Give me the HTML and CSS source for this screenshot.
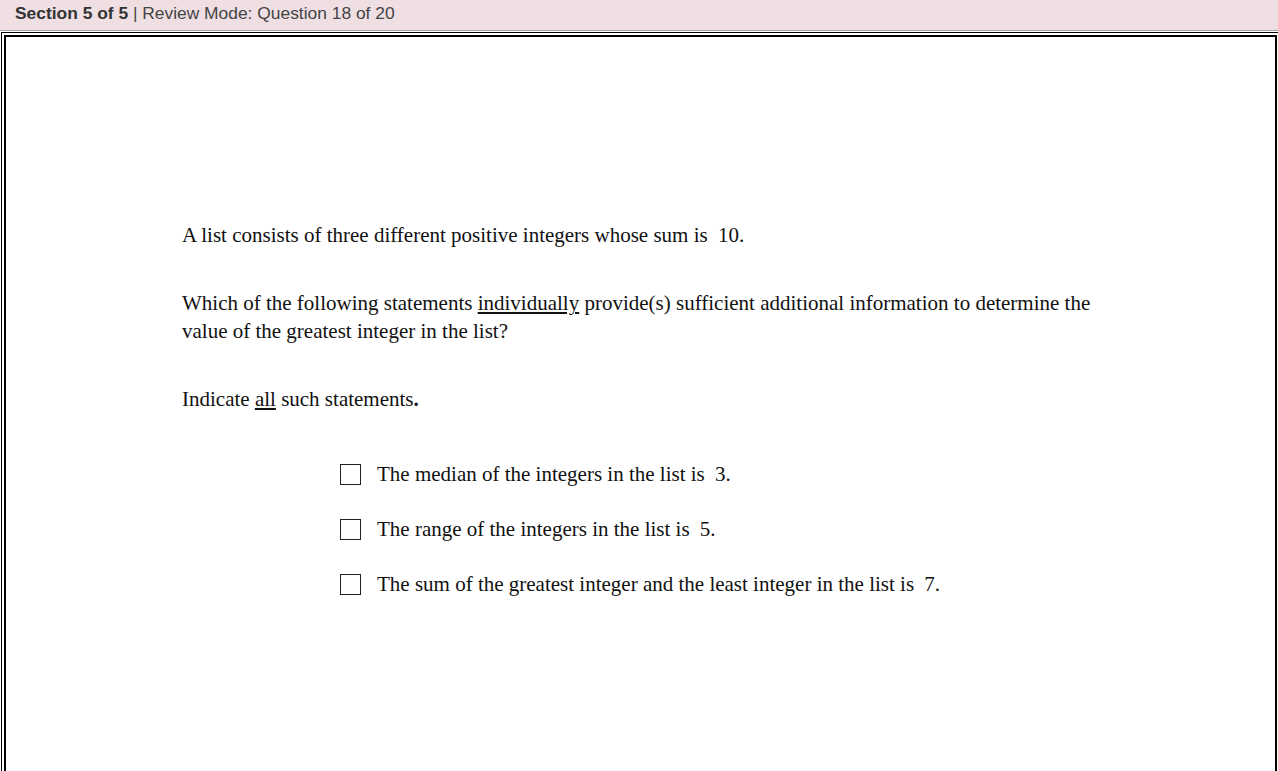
FILE: index.html
```html
<!DOCTYPE html>
<html>
<head>
<meta charset="utf-8">
<link rel="stylesheet" href="styles.css">
</head>
<body>
<div class="header">
  <span class="section">Section 5 of 5</span> | Review Mode: Question 18 of 20
</div>
<div class="frame-outer">
  <div class="frame-inner">
    <div class="question">
      <p class="para">A list consists of three different positive integers whose sum is <span class="num">10.</span></p>
      <p class="para">Which of the following statements <u>individually</u> provide(s) sufficient additional information to determine the value of the greatest integer in the list?</p>
      <p class="para">Indicate <u>all</u> such statements<b>.</b></p>
      <div class="options">
        <div class="option"><span class="box"></span><span class="label">The median of the integers in the list is <span class="num">3.</span></span></div>
        <div class="option"><span class="box"></span><span class="label">The range of the integers in the list is <span class="num">5.</span></span></div>
        <div class="option"><span class="box"></span><span class="label">The sum of the greatest integer and the least integer in the list is <span class="num">7.</span></span></div>
      </div>
    </div>
  </div>
</div>
</body>
</html>
```

FILE: styles.css
```css
html, body {
  margin: 0;
  padding: 0;
  background: #fff;
  overflow: hidden;
  height: 771px;
}
.header {
  height: 30px;
  background: #efdfe3;
  border-bottom: 1px solid #a8a4a6;
  font-family: "Liberation Sans", Arial, sans-serif;
  font-size: 17.4px;
  color: #444;
  line-height: 27px;
  padding-left: 15px;
  box-sizing: content-box;
}
.section {
  font-weight: bold;
  color: #333;
}
.frame-outer {
  margin-top: 1px;
  margin-left: 1px;
  width: 1290px;
  height: 745px;
  border: 1px solid #000;
  padding: 2px;
  box-sizing: border-box;
}
.frame-inner {
  width: 1273px;
  height: 100%;
  border: 2px solid #000;
  box-sizing: border-box;
}
.question {
  padding-top: 184px;
  padding-left: 176px;
  width: 928px;
  font-family: "Liberation Serif", "Times New Roman", serif;
  font-size: 21px;
  line-height: 28px;
  color: #111;
}
.para {
  margin: 0 0 40px 0;
}
.num {
  margin-left: 5px;
}
u {
  text-decoration-thickness: 2px;
  text-underline-offset: 2px;
}
.options {
  padding-left: 158px;
  padding-top: 7px;
}
.option {
  display: flex;
  align-items: center;
  height: 28px;
  margin-bottom: 27px;
}
.box {
  width: 19px;
  height: 19px;
  border: 1px solid #222;
  flex: none;
  margin-right: 16px;
  margin-top: 1px;
}
```
